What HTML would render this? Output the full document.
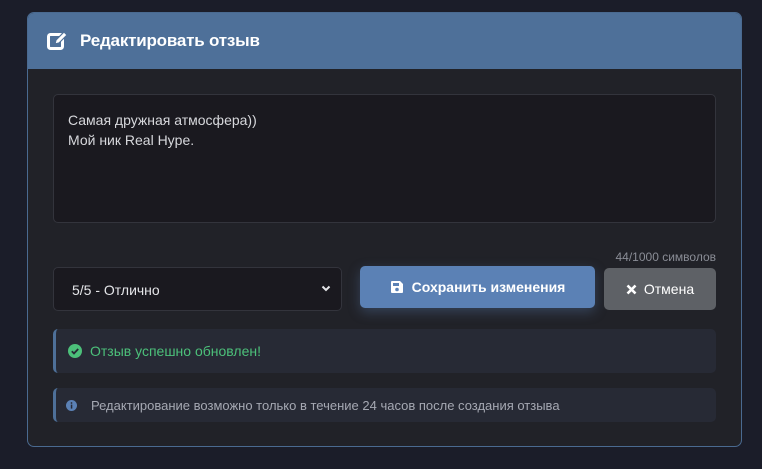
<!DOCTYPE html>
<html><head><meta charset="utf-8"><style>
*{box-sizing:border-box;margin:0;padding:0}
body{width:762px;height:469px;background:#1b1d29;font-family:"Liberation Sans",sans-serif;position:relative;overflow:hidden}
.card{position:absolute;left:27px;top:12px;width:715px;height:435px;background:#212228;border:1px solid #4a6a90;border-radius:7px;overflow:hidden}
.hd{height:56px;background:#4e7099;display:flex;align-items:center;padding-left:19px;color:#fff;font-weight:bold;font-size:17px;letter-spacing:-0.2px}
.hd svg{margin-right:11px}
.ta{position:absolute;left:25px;top:81px;width:663px;height:129px;background:#1a191f;border:1px solid #33343c;border-radius:5px;color:#d7d8dc;font-size:14px;line-height:20px;padding:15px 14px}
.cnt{position:absolute;right:25px;top:237px;font-size:12px;color:#8a8d96}
.sel{position:absolute;left:25px;top:254px;width:289px;height:44px;background:#1a191f;border:1px solid #33343c;border-radius:5px;color:#e4e5e8;font-size:14px;padding:14px 18px}
.sel svg{position:absolute;right:10px;top:17px}
.save{position:absolute;left:332px;top:253px;width:235px;height:42px;background:#5b81b5;border-radius:5px;color:#fff;font-weight:bold;font-size:14px;display:flex;align-items:center;justify-content:center;box-shadow:0 4px 12px rgba(91,129,181,.35)}
.cancel{position:absolute;left:576px;top:255px;width:112px;height:42px;background:#5e6166;border-radius:5px;color:#fff;font-size:14px;display:flex;align-items:center;justify-content:center}
.al{position:absolute;left:25px;width:663px;background:#272a35;border-left:3px solid #4e7099;border-radius:5px;display:flex;align-items:center}
.ok{top:316px;height:44px;color:#4cc07a;font-size:14px;padding-left:12px}
.inf{top:375px;height:34px;color:#a5a8b2;font-size:13px;padding-left:10px}
</style></head><body>
<div class="card">
<div class="hd"><svg width="22" height="20" viewBox="0 0 22 20"><rect x="1.5" y="3.5" width="14" height="14" rx="2" fill="none" stroke="#fff" stroke-width="3"/><path d="M8 13l1-4 8-8 3 3-8 8z" fill="#fff" stroke="#4e7099" stroke-width="1.2"/></svg>Редактировать отзыв</div>
<div class="ta">Самая дружная атмосфера))<br>Мой ник Real Hype.</div>
<div class="cnt">44/1000 символов</div>
<div class="sel">5/5 - Отлично<svg width="10" height="7" viewBox="0 0 10 7"><path d="M1.5 1.5l3.5 3.5 3.5-3.5" stroke="#e4e5e8" stroke-width="2" fill="none"/></svg></div>
<div class="save"><svg width="14" height="14" viewBox="0 0 14 14" style="margin-right:8px"><path d="M1 2a1 1 0 011-1h8l3 3v8a1 1 0 01-1 1H2a1 1 0 01-1-1z" fill="#fff"/><rect x="3" y="3" width="6" height="3" fill="#5b81b5"/><circle cx="7" cy="9.5" r="1.8" fill="#5b81b5"/></svg>Сохранить изменения</div>
<div class="cancel"><svg width="11" height="11" viewBox="0 0 11 11" style="margin-right:7px"><path d="M1.5 1.5l8 8M9.5 1.5l-8 8" stroke="#fff" stroke-width="2.6"/></svg>Отмена</div>
<div class="al ok"><svg width="14" height="14" viewBox="0 0 14 14" style="margin-right:8px"><circle cx="7" cy="7" r="7" fill="#4cc07a"/><path d="M3.8 7.2l2.2 2.2 4.2-4.4" stroke="#272a35" stroke-width="1.8" fill="none"/></svg>Отзыв успешно обновлен!</div>
<div class="al inf"><svg width="11" height="11" viewBox="0 0 11 11" style="margin-right:14px"><circle cx="5.5" cy="5.5" r="5.5" fill="#5b81b5"/><rect x="4.8" y="4.6" width="1.5" height="4" fill="#272a35"/><circle cx="5.5" cy="3" r=".9" fill="#272a35"/></svg>Редактирование возможно только в течение 24 часов после создания отзыва</div>
</div>
</body></html>
